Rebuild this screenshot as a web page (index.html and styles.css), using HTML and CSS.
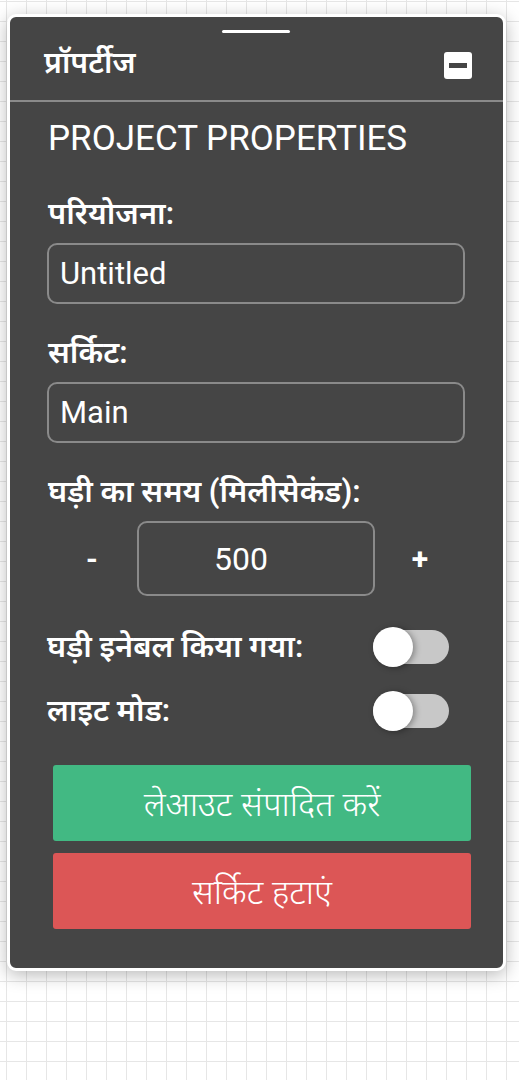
FILE: index.html
```html
<!DOCTYPE html>
<html lang="hi">
<head>
    <meta charset="UTF-8">
    <meta name="viewport" content="width=device-width, initial-scale=1.0">
    <title>प्रॉपर्टीज</title>
    <link rel="stylesheet" href="styles.css">
</head>
<body>
    <div class="panel">
        <div class="panel-header">
            <div class="drag-handle"></div>
            <div class="panel-title">प्रॉपर्टीज</div>
            <span class="minimize"><span class="minimize-bar"></span></span>
        </div>
        <div class="panel-body">
            <h2 class="section-title">PROJECT PROPERTIES</h2>

            <label class="field-label">परियोजना:</label>
            <input class="text-input" type="text" value="Untitled">

            <label class="field-label">सर्किट:</label>
            <input class="text-input" type="text" value="Main">

            <label class="field-label">घड़ी का समय (मिलीसेकंड):</label>
            <div class="stepper">
                <span class="step-btn minus">-</span>
                <input class="step-input" type="text" value="500">
                <span class="step-btn plus">+</span>
            </div>

            <div class="toggle-row first">
                <span class="field-label inline">घड़ी इनेबल किया गया:</span>
                <span class="toggle"><span class="knob"></span></span>
            </div>
            <div class="toggle-row">
                <span class="field-label inline">लाइट मोड:</span>
                <span class="toggle"><span class="knob"></span></span>
            </div>

            <div class="actions">
                <button class="btn btn-green">लेआउट संपादित करें</button>
                <button class="btn btn-red">सर्किट हटाएं</button>
            </div>
        </div>
    </div>
</body>
</html>
```

FILE: styles.css
```css
html, body {
    margin: 0;
    height: 100%;
}
body {
    background-color: #fff;
    background-image:
        linear-gradient(to right, #e6e6e6 1px, transparent 1px),
        linear-gradient(to bottom, #e6e6e6 1px, transparent 1px);
    background-size: 20px 20px;
    background-position: 6px 1px;
    padding: 14px 0 0 7px;
    box-sizing: border-box;
    font-family: Roboto, "Noto Sans", sans-serif;
    color: #fff;
}
.panel {
    width: 499px;
    height: 957px;
    box-sizing: border-box;
    background-color: #454545;
    border: 3px solid #fff;
    border-radius: 9px;
    box-shadow: 0 4px 18px rgba(0, 0, 0, 0.28);
}
.panel-header {
    position: relative;
    height: 83px;
    display: flex;
    align-items: center;
    justify-content: space-between;
    padding: 0 31px 0 34px;
    border-bottom: 2px solid #8a8a8a;
}
.drag-handle {
    position: absolute;
    top: 13px;
    left: 212px;
    width: 68px;
    height: 3px;
    background-color: #fff;
    border-radius: 2px;
}
.panel-title {
    font-size: 30px;
    font-weight: 600;
    margin-top: 6px;
}
.minimize {
    width: 28px;
    height: 27px;
    margin-top: 14px;
    background-color: #fff;
    border-radius: 3px;
    display: flex;
    align-items: center;
    justify-content: center;
}
.minimize-bar {
    width: 18px;
    height: 5px;
    background-color: #454545;
}
.panel-body {
    padding: 0 38px 0 37px;
}
.section-title {
    margin: 17px 0 0 1px;
    padding-bottom: 6px;
    font-size: 35px;
    font-weight: normal;
    line-height: 40px;
}
.field-label {
    display: block;
    margin: 32px 0 12px 1px;
    font-size: 30.6px;
    font-weight: 600;
    line-height: 34px;
}
.field-label.inline {
    display: inline;
    margin: 0;
}
.text-input {
    display: block;
    width: 100%;
    height: 61px;
    box-sizing: border-box;
    background: transparent;
    border: 2px solid #8a8a8a;
    border-radius: 10px;
    padding: 0 11px;
    color: #fff;
    font-family: Roboto, sans-serif;
    font-size: 31px;
    outline: none;
}
.stepper {
    display: flex;
    align-items: center;
}
.step-btn {
    width: 90px;
    text-align: center;
    font-size: 30px;
    font-weight: bold;
}
.step-input {
    width: 238px;
    height: 75px;
    box-sizing: border-box;
    background: transparent;
    border: 2px solid #8a8a8a;
    border-radius: 10px;
    padding: 0 30px 0 0;
    color: #fff;
    text-align: center;
    font-family: Roboto, sans-serif;
    font-size: 32px;
    outline: none;
}
.toggle-row {
    display: flex;
    align-items: center;
    justify-content: space-between;
    height: 40px;
    padding-right: 16px;
    margin-top: 24px;
}
.toggle-row.first {
    margin-top: 31px;
}
.toggle {
    position: relative;
    width: 76px;
    height: 34px;
    border-radius: 17px;
    background-color: #c8c8c8;
}
.knob {
    position: absolute;
    left: 0;
    top: -3px;
    width: 40px;
    height: 40px;
    border-radius: 50%;
    background-color: #fff;
    box-shadow: 2px 1px 6px rgba(0, 0, 0, 0.35);
}
.actions {
    display: flex;
    flex-direction: column;
    gap: 12px;
    margin: 34px -6px 0 6px;
}
.btn {
    height: 76px;
    border: none;
    border-radius: 3px;
    color: #fff;
    font-family: "Noto Sans", sans-serif;
    font-size: 34px;
    font-weight: 300;
}
.btn-green {
    background-color: #42b983;
}
.btn-red {
    background-color: #dc5656;
}
```
